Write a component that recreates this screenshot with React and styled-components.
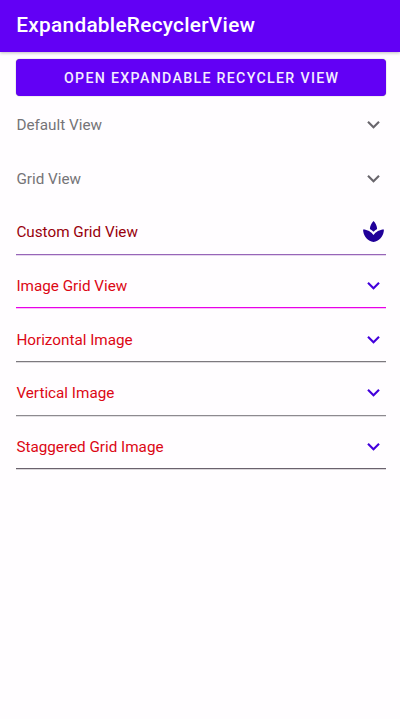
import React from "react";
import styled, { createGlobalStyle } from "styled-components";

const GlobalStyle = createGlobalStyle`
  * { box-sizing: border-box; }
  body { margin: 0; background: #fffdff; font-family: Roboto, "Noto Sans", sans-serif; }
`;

const Screen = styled.main`
  width: 100%;
  height: 719px;
  overflow: hidden;
  display: flex;
  flex-direction: column;
  background: #fffdff;
`;

const AppBar = styled.header`
  flex: none;
  height: 52.4px;
  padding: 0 16px 2px;
  display: flex;
  align-items: center;
  background: #6200f5;
  box-shadow: 0 1px 3px rgba(0, 0, 0, 0.25);
`;

const Title = styled.h1`
  margin: 0;
  padding-left: 0.3px;
  font-size: 20.8px;
  line-height: 28px;
  font-weight: 500;
  letter-spacing: 0.28px;
  color: #fff;
  white-space: nowrap;
`;

const OpenButton = styled.button`
  flex: none;
  height: 37px;
  margin: 6.4px 14px 0 16px;
  padding: 1px 0 0 1.4px;
  border: 0;
  border-radius: 4px;
  background: #6200f5;
  box-shadow: 0 0 1px rgba(0, 0, 0, 0.6);
  color: #f4edff;
  font: 500 14.2px/20px Roboto, sans-serif;
  letter-spacing: 1.31px;
  white-space: nowrap;
`;

const List = styled.ul`
  margin: 0 14px 0 16px;
  padding: 0;
  list-style: none;
`;

const Row = styled.li`
  height: 53.62px;
  padding-top: 10px;
  display: flex;
  align-items: center;
  justify-content: space-between;
  border-bottom: 1px solid ${({ $line }) => $line || "transparent"};
  box-shadow: ${({ $line }) => ($line ? `0 1px 0 ${$line}40` : "none")};
  color: ${({ $color }) => $color};

  &:first-child {
    height: 51.7px;
    padding-top: 8.1px;
  }
`;

const Label = styled.span`
  padding-left: 0.4px;
  font-size: 15.25px;
  line-height: 20px;
  white-space: nowrap;
`;

const Icon = styled.svg`
  width: 25px;
  height: 25px;
  margin-bottom: 1px;
  fill: ${({ $fill }) => $fill};
`;

const paths = {
  chevron: "M16.59 8.59 12 13.17 7.41 8.59 6 10l6 6 6-6z",
  spa: "M15.49 9.63c-.18-2.79-1.31-5.51-3.43-7.63-2.14 2.14-3.32 4.86-3.55 7.63 1.28.68 2.46 1.56 3.49 2.63 1.03-1.06 2.21-1.94 3.49-2.63zM12 15.45C9.85 12.17 6.18 10 2 10c0 5.32 3.36 9.82 8.03 11.49.63.23 1.29.4 1.97.51.68-.12 1.33-.29 1.97-.51C18.64 19.82 22 15.32 22 10c-4.18 0-7.85 2.17-10 5.45z",
};

const rows = [
  { label: "Default View", color: "#757477", fill: "#69666c" },
  { label: "Grid View", color: "#757477", fill: "#69666c" },
  { label: "Custom Grid View", color: "#98000c", fill: "#200099", line: "#9765b8", icon: "spa" },
  { label: "Image Grid View", color: "#dc0714", fill: "#4300dc", line: "#e800e8" },
  { label: "Horizontal Image", color: "#dc0714", fill: "#4300dc", line: "#7c797e" },
  { label: "Vertical Image", color: "#dc0714", fill: "#4300dc", line: "#8d8a8f" },
  { label: "Staggered Grid Image", color: "#dc0714", fill: "#4300dc", line: "#6a626d" },
];

export default function App() {
  return (
    <Screen>
      <GlobalStyle />
      <AppBar>
        <Title>ExpandableRecyclerView</Title>
      </AppBar>
      <OpenButton>OPEN EXPANDABLE RECYCLER VIEW</OpenButton>
      <List>
        {rows.map(({ label, color, fill, line, icon = "chevron" }) => (
          <Row key={label} $color={color} $line={line}>
            <Label>{label}</Label>
            <Icon viewBox="0 0 24 24" $fill={fill} aria-hidden="true">
              <path d={paths[icon]} />
            </Icon>
          </Row>
        ))}
      </List>
    </Screen>
  );
}
